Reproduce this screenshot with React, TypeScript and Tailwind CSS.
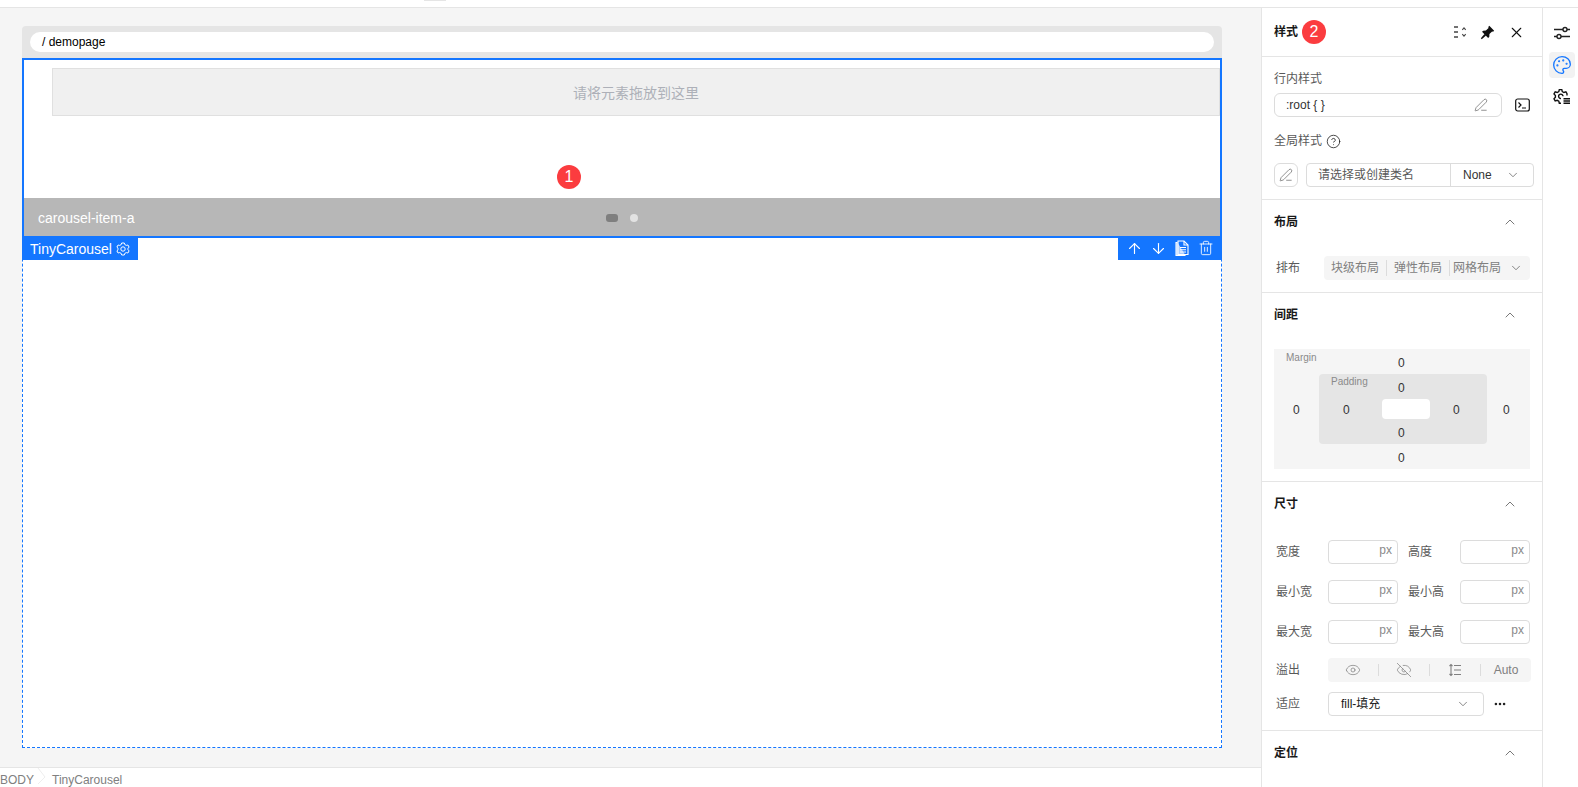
import React, { type ReactNode } from "react";
import {
  ArrowDown,
  ArrowUp,
  ChevronDown,
  ChevronUp,
  CircleHelp,
  Ellipsis,
  Eye,
  EyeOff,
  Palette,
  PenLine,
  Trash2,
  X,
} from "lucide-react";

const FONT = "font-['Liberation_Sans','Noto_Sans_CJK_SC',sans-serif]";

// --- Small drawings ---

function SlidersIcon() {
  return (
    <svg width="18" height="18" viewBox="0 0 18 18" fill="none" stroke="#222" strokeWidth="1.4">
      <path d="M1 5.500h9M14 5.500h3M1 12.500h3M8 12.500h9" />
      <circle cx="12" cy="5.500" r="2" />
      <circle cx="6" cy="12.500" r="2" />
    </svg>
  );
}

function GearListIcon() {
  return (
    <svg width="18" height="18" viewBox="0 0 18 18" fill="none" stroke="#111" strokeWidth="1.4" className="-mt-px">
      <path d="M8 16.200H6.300l-.5-2-1.600-.9-2 .6L1 11.800l1.400-1.500V8.500L1 7l1.200-2.100 2 .6 1.600-.9.500-2h2.500l.5 2 1.600.9 2-.6L14 6.600v2" />
      <path d="M10 9.300a2.200 2.200 0 1 0-2 2.200" />
      <path d="M10.500 11.800h6.500M10.500 14h6.500M10.500 16.200h6.500" />
    </svg>
  );
}

function CollapseListIcon() {
  return (
    <svg width="14" height="14" viewBox="0 0 14 14" fill="none" stroke="#444" strokeWidth="1.500">
      <path d="M1 2h4M1 7h4M1 12h4" />
      <path d="M9.300 4.800 11 2.800l1.700 2M9.300 9.200 11 11.200l1.700-2" strokeWidth="1.100" />
    </svg>
  );
}

function PinIcon() {
  return (
    <svg width="15" height="15" viewBox="0 0 14 14" fill="#111">
      <path d="M8.700.8 13.200 5.300 12.200 6.300 11.300 6 8.800 8.500 8.700 11 7.600 12.100 1.900 6.400 3 5.300 5.500 5.200 8 2.700 7.700 1.800Z" />
      <path d="M4.200 8.300 5.700 9.800 1.600 13.200.8 12.400Z" />
    </svg>
  );
}

function TerminalIcon() {
  return (
    <svg width="15" height="14" viewBox="0 0 15 14" fill="none" stroke="#111" strokeWidth="1.200" className="ml-[13px] shrink-0">
      <rect x="0.700" y="1" width="13.600" height="12" rx="2" />
      <path d="M3.500 4.500 6 7 3.500 9.500M7 10h4" />
    </svg>
  );
}

function CopyDocIcon() {
  return (
    <svg width="16" height="17" viewBox="0 0 16 17" fill="none" stroke="#fff" strokeWidth="1.100">
      <path d="M3.500 2.500H2v13h9v-1" fill="#a9ccff" />
      <path d="M4 1h6l4 4v9.500H4Z" />
      <path d="M10 1v4h4M6 7.500h6M6 9.800h6M6 12h6" />
    </svg>
  );
}

function GearIcon() {
  return (
    <svg width="14" height="14" viewBox="0 0 14 14" fill="none" stroke="#fff" strokeWidth="1">
      <path d="M5.700 1h2.600l.5 1.600 1.500.8 1.600-.4 1.200 2.100L12 6.200v1.600l1.100 1.100-1.200 2.100-1.600-.4-1.500.8L8.300 13H5.700l-.5-1.600-1.500-.8-1.600.4L.9 8.900 2 7.800V6.200L.9 5.100 2.100 3l1.600.4 1.500-.8Z" />
      <circle cx="7" cy="7" r="2.200" />
    </svg>
  );
}

function OverflowListIcon() {
  return (
    <svg width="14" height="14" viewBox="0 0 14 14" fill="none" stroke="#808080" strokeWidth="1.100">
      <path d="M6 2.500h7M6 7h7M6 11.500h7M3 1.500v11M1.500 3 3 1.500 4.500 3M1.500 11 3 12.500 4.500 11" />
    </svg>
  );
}

function Badge({ children }: { children: ReactNode }) {
  return (
    <span className="flex h-6 w-6 items-center justify-center rounded-full bg-[#fb3c3f] text-base leading-none text-white">
      {children}
    </span>
  );
}

function ToolSlot({ children }: { children: ReactNode }) {
  return <span className="flex w-6 justify-center">{children}</span>;
}

// --- Canvas ---

function Canvas() {
  return (
    <div className="flex min-w-0 flex-1 flex-col bg-[#f5f5f5]">
      <div className="flex-1 pl-[22px] pr-[39px] pt-[18px]">
        <div className="flex h-8 items-center rounded-t bg-[#e5e5e5] px-2">
          <div className="flex h-5 flex-1 items-center rounded-full bg-white px-3 text-xs text-black">/ demopage</div>
        </div>
        <div className="h-[690px] border border-dashed border-[#1476ff] bg-white">
          <div className="-mx-px -mt-px h-[180px] border-2 border-[#1476ff]">
            <div className="ml-[28px] mt-2 flex h-[48px] items-center justify-center border border-[#e0e0e0] bg-[#f0f0f0] pt-[2px] text-sm text-[#adb0b8]">
              请将元素拖放到这里
            </div>
            <div className="flex h-[82px] items-end pb-[9px] pl-[533px]">
              <Badge>1</Badge>
            </div>
            <div className="relative flex h-[38px] items-center justify-center bg-[#b7b7b7] pt-[2px]">
              <span className="absolute left-[14px] text-sm text-white">carousel-item-a</span>
              <span className="h-2 w-3 rounded-[3px] bg-[#7f7f7f]" />
              <span className="ml-3 h-2 w-2 rounded-full bg-[#e2e2e2]" />
            </div>
          </div>
          <div className="-mx-px flex items-start justify-between">
            <div className="flex h-[22px] w-[116px] items-center gap-1 bg-[#1476ff] pl-2 text-sm text-white">
              TinyCarousel <GearIcon />
            </div>
            <div className="-mt-[2px] flex h-[24px] w-[104px] items-center bg-[#1476ff] pl-1 text-white">
              <ToolSlot><ArrowUp size={17} strokeWidth={1.6} /></ToolSlot>
              <ToolSlot><ArrowDown size={17} strokeWidth={1.6} /></ToolSlot>
              <ToolSlot><CopyDocIcon /></ToolSlot>
              <ToolSlot><Trash2 size={16} strokeWidth={1.3} /></ToolSlot>
            </div>
          </div>
        </div>
      </div>
      <div className="flex h-[20px] items-start border-t border-[#e5e5e5] bg-white pt-[4px] text-xs leading-4 text-[#808080]">
        <span>BODY</span>
        <svg width="18" height="16" viewBox="0 0 18 16" fill="none" stroke="#eeeeee" className="-mt-[4px]">
          <path d="M4 0l7 9-7 7" />
        </svg>
        <span>TinyCarousel</span>
      </div>
    </div>
  );
}

// --- Settings panel ---

function SectionHead({ title }: { title: string }) {
  return (
    <div className="flex h-[44px] items-center justify-between pl-3 pr-[24px] text-xs font-bold text-[#191919]">
      <span>{title}</span>
      <ChevronUp size={16} strokeWidth={1.2} className="text-[#555]" />
    </div>
  );
}

function SizeField({ label }: { label: string }) {
  return (
    <div className="flex items-center">
      <span className="w-[54px] pl-[2px] text-xs text-[#595959]">{label}</span>
      <div className="flex h-6 w-[70px] justify-end rounded border border-[#dcdcdc] pr-[5px] text-xs leading-[18px] text-[#8a8a8a]">px</div>
    </div>
  );
}

function Segment({ children }: { children: ReactNode }) {
  return <span className="flex h-3 flex-1 items-center justify-center border-l border-[#dcdcdc] first:border-l-0">{children}</span>;
}

function Num({ children, className }: { children: ReactNode; className: string }) {
  return <span className={`absolute text-xs leading-none text-[#333] ${className}`}>{children}</span>;
}

function SpacingBox() {
  return (
    <div className="relative mx-3 mt-[12px] h-[120px] w-[256px] bg-[#f5f5f5]">
      <span className="absolute left-3 top-[1px] text-[10px] text-[#8a8a8a]">Margin</span>
      <Num className="left-[124px] top-[8px]">0</Num>
      <Num className="left-[19px] top-[55px]">0</Num>
      <Num className="left-[229px] top-[55px]">0</Num>
      <Num className="left-[124px] top-[103px]">0</Num>
      <div className="absolute left-[45px] top-[25px] h-[70px] w-[168px] rounded bg-[#e5e5e5]">
        <span className="absolute left-3 top-0 text-[10px] text-[#8a8a8a]">Padding</span>
        <Num className="left-[79px] top-[8px]">0</Num>
        <Num className="left-[24px] top-[30px]">0</Num>
        <Num className="left-[134px] top-[30px]">0</Num>
        <Num className="left-[79px] top-[53px]">0</Num>
        <div className="absolute left-[63px] top-[25px] h-5 w-12 rounded bg-white" />
      </div>
    </div>
  );
}

function Panel() {
  return (
    <div className="flex w-[282px] shrink-0 flex-col border-x border-[#e5e5e5] bg-white">
      {/* header */}
      <div className="flex h-[49px] shrink-0 items-center border-b border-[#e5e5e5] pl-3 pr-[17px]">
        <span className="text-xs font-bold text-[#191919]">样式</span>
        <span className="ml-1"><Badge>2</Badge></span>
        <span className="ml-auto flex items-center gap-[13px]">
          <CollapseListIcon />
          <PinIcon />
          <X size={17} strokeWidth={1.5} className="text-[#111]" />
        </span>
      </div>

      {/* inline and global styles */}
      <div className="h-[143px] shrink-0 border-b border-[#e5e5e5] px-3 pt-[13px]">
        <div className="text-xs leading-[18px] text-[#595959]">行内样式</div>
        <div className="mt-[5px] flex items-center">
          <div className="flex h-6 w-[228px] shrink-0 items-center justify-between rounded-md border border-[#dcdcdc] pl-[11px] pr-[13px] text-xs text-[#333]">
            :root {"{ }"}
            <PenLine size={14} strokeWidth={1.1} className="text-[#555]" />
          </div>
          <TerminalIcon />
        </div>
        <div className="mt-[15px] flex h-[18px] items-center text-xs text-[#595959]">
          全局样式
          <CircleHelp size={15} strokeWidth={1.3} className="ml-1 text-[#222]" />
        </div>
        <div className="mt-[13px] flex h-6 items-center">
          <div className="flex h-6 w-6 shrink-0 items-center justify-center rounded-md border border-[#dcdcdc]">
            <PenLine size={14} strokeWidth={1.1} className="text-[#555]" />
          </div>
          <div className="ml-2 flex h-6 w-[228px] shrink-0 items-center rounded border border-[#dcdcdc] text-xs">
            <span className="w-[143px] pl-[11px] text-[#595959]">请选择或创建类名</span>
            <span className="flex h-full flex-1 items-center justify-between border-l border-[#dcdcdc] pl-3 pr-[13px] text-[#333]">
              None
              <ChevronDown size={14} strokeWidth={1.2} className="text-[#555]" />
            </span>
          </div>
        </div>
      </div>

      {/* layout */}
      <div className="h-[93px] shrink-0 border-b border-[#e5e5e5]">
        <SectionHead title="布局" />
        <div className="mt-[12px] flex items-center pl-[14px]">
          <span className="w-[48px] text-xs text-[#595959]">排布</span>
          <div className="flex h-6 w-[206px] items-center rounded bg-[#f5f5f5] pr-[7px] text-xs text-[#808080]">
            <span className="w-[63px] border-r border-[#dcdcdc] text-center">块级布局</span>
            <span className="w-[63px] border-r border-[#dcdcdc] text-center">弹性布局</span>
            <span className="ml-[3px]">网格布局</span>
            <ChevronDown size={14} strokeWidth={1.2} className="ml-auto text-[#555]" />
          </div>
        </div>
      </div>

      {/* spacing */}
      <div className="h-[189px] shrink-0 border-b border-[#e5e5e5]">
        <SectionHead title="间距" />
        <SpacingBox />
      </div>

      {/* size */}
      <div className="h-[249px] shrink-0 border-b border-[#e5e5e5]">
        <SectionHead title="尺寸" />
        <div className="mt-[14px] grid grid-cols-[132px_124px] gap-y-4 pl-3">
          <SizeField label="宽度" />
          <SizeField label="高度" />
          <SizeField label="最小宽" />
          <SizeField label="最小高" />
          <SizeField label="最大宽" />
          <SizeField label="最大高" />
        </div>
        <div className="mt-[14px] flex items-center pl-[14px]">
          <span className="w-[52px] text-xs text-[#595959]">溢出</span>
          <div className="flex h-6 w-[203px] items-center rounded bg-[#f5f5f5] text-xs text-[#808080]">
            <Segment><Eye size={16} strokeWidth={1.1} /></Segment>
            <Segment><EyeOff size={16} strokeWidth={1.1} /></Segment>
            <Segment><OverflowListIcon /></Segment>
            <Segment>Auto</Segment>
          </div>
        </div>
        <div className="mt-[10px] flex items-center pl-[14px]">
          <span className="w-[52px] text-xs text-[#595959]">适应</span>
          <div className="flex h-6 w-[156px] items-center justify-between rounded border border-[#dcdcdc] pl-[12px] pr-[13px] text-xs text-[#191919]">
            fill-填充
            <ChevronDown size={14} strokeWidth={1.2} className="text-[#555]" />
          </div>
          <Ellipsis size={14} strokeWidth={2.4} className="ml-[9px] text-[#222]" />
        </div>
      </div>

      <SectionHead title="定位" />
    </div>
  );
}

// --- Icon rail ---

function Rail() {
  return (
    <div className="flex w-[35px] shrink-0 flex-col items-center gap-[10px] bg-white pl-[3px] pt-[16px]">
      <span className="flex h-[18px] items-center"><SlidersIcon /></span>
      <span className="flex h-[26px] w-[26px] items-center justify-center rounded bg-[#f2f2f2]">
        <Palette size={20} strokeWidth={1.6} className="text-[#1476ff]" />
      </span>
      <GearListIcon />
    </div>
  );
}

export default function App() {
  return (
    <div className={`${FONT} flex h-[787px] w-[1578px] flex-col overflow-hidden bg-white`}>
      <div className="h-2 shrink-0 border-b border-[#e5e5e5]">
        <div className="ml-[424px] h-px w-[22px] bg-[#e5e5e5]" />
      </div>
      <div className="flex min-h-0 flex-1">
        <Canvas />
        <Panel />
        <Rail />
      </div>
    </div>
  );
}
